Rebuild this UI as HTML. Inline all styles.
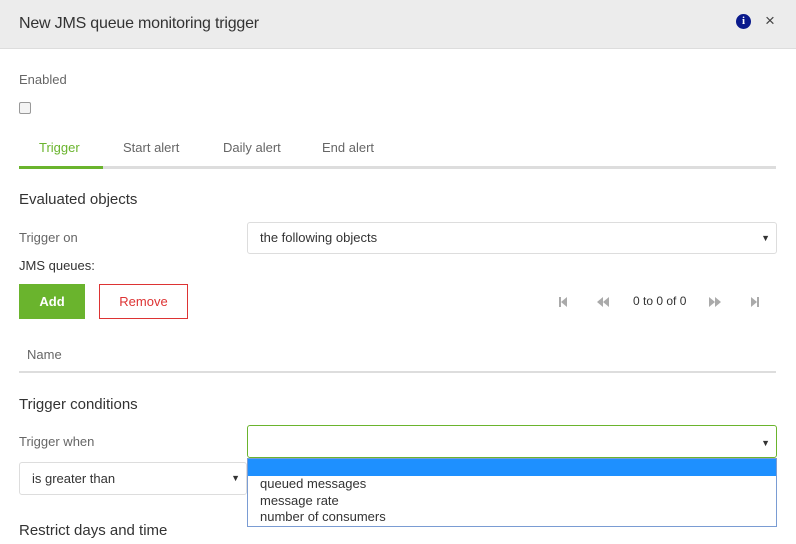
<!DOCTYPE html>
<html><head><style>
*{box-sizing:border-box;margin:0;padding:0}
body{width:796px;height:544px;overflow:hidden;background:#fff;font-family:"Liberation Sans",sans-serif;color:#333;position:relative}
.a{position:absolute}
.hdr{left:0;top:0;width:796px;height:49px;background:#ececec;border-bottom:1px solid #ddd}
.t13{font-size:13px}
.lbl{font-size:13px;color:#666}
.sel{border:1px solid #ddd;border-radius:3px;font-size:13px;color:#333;padding-left:12px;line-height:30px}
.arr{position:absolute;right:6px;top:0;font-size:9px;color:#333}
</style></head><body>
<div class="a hdr"></div>
<div class="a" style="left:19px;top:15px;font-size:16px;color:#333;letter-spacing:-0.2px">New JMS queue monitoring trigger</div>
<div class="a" style="left:736px;top:14px;width:15px;height:15px;border-radius:50%;background:#0a1a8c;color:#fff;font:bold 11px 'Liberation Serif',serif;text-align:center;line-height:15px">i</div>
<div class="a" style="left:765px;top:11px;font-size:17px;color:#444">×</div>
<div class="a lbl" style="left:19px;top:72px">Enabled</div>
<div class="a" style="left:19px;top:102px;width:12px;height:12px;border:1px solid #999;border-radius:2px;background:#f4f4f4"></div>
<div class="a" style="left:19px;top:166px;width:757px;height:3px;background:#ddd"></div>
<div class="a" style="left:19px;top:166px;width:84px;height:3px;background:#6ab42d"></div>
<div class="a t13" style="left:39px;top:140px;color:#6ab42d">Trigger</div>
<div class="a lbl" style="left:123px;top:140px">Start alert</div>
<div class="a lbl" style="left:223px;top:140px">Daily alert</div>
<div class="a lbl" style="left:322px;top:140px">End alert</div>
<div class="a" style="left:19px;top:191px;font-size:15px;color:#333">Evaluated objects</div>
<div class="a lbl" style="left:19px;top:230px">Trigger on</div>
<div class="a sel" style="left:247px;top:222px;width:530px;height:32px">the following objects<span class="arr">▼</span></div>
<div class="a t13" style="left:19px;top:258px">JMS queues:</div>
<div class="a" style="left:19px;top:284px;width:66px;height:35px;background:#6ab42d;color:#fff;font-size:13px;font-weight:bold;text-align:center;line-height:35px">Add</div>
<div class="a" style="left:99px;top:284px;width:89px;height:35px;border:1px solid #d33;color:#d33;font-size:13px;text-align:center;line-height:33px">Remove</div>
<svg class="a" style="left:555px;top:294px" width="220" height="16" fill="#aaa">
<rect x="4" y="3" width="2" height="10"/><path d="M12 3 L6 8 L12 13Z"/>
<path d="M48 3 L42 8 L48 13Z M54 3 L48 8 L54 13Z"/>
<path d="M154 3 L160 8 L154 13Z M160 3 L166 8 L160 13Z"/>
<path d="M196 3 L202 8 L196 13Z"/><rect x="202" y="3" width="2" height="10"/>
</svg>
<div class="a" style="left:633px;top:294px;font-size:12px;color:#333">0 to 0 of 0</div>
<div class="a lbl" style="left:27px;top:347px">Name</div>
<div class="a" style="left:19px;top:371px;width:757px;height:2px;background:#ddd"></div>
<div class="a" style="left:19px;top:396px;font-size:15px">Trigger conditions</div>
<div class="a lbl" style="left:19px;top:434px">Trigger when</div>
<div class="a sel" style="left:247px;top:425px;width:530px;height:33px;border-color:#6ab42d"><span class="arr" style="top:2px">▼</span></div>
<div class="a sel" style="left:19px;top:462px;width:228px;height:33px;line-height:31px">is greater than<span class="arr">▼</span></div>
<div class="a" style="left:247px;top:458px;width:530px;height:69px;border:1px solid #7a9cd3;background:#fff;font-size:13px;color:#333">
<div style="height:17px;background:#1e90ff"></div>
<div style="padding-left:12px;line-height:16.5px">queued messages<br>message rate<br>number of consumers</div>
</div>
<div class="a" style="left:19px;top:522px;font-size:15px">Restrict days and time</div>
</body></html>
